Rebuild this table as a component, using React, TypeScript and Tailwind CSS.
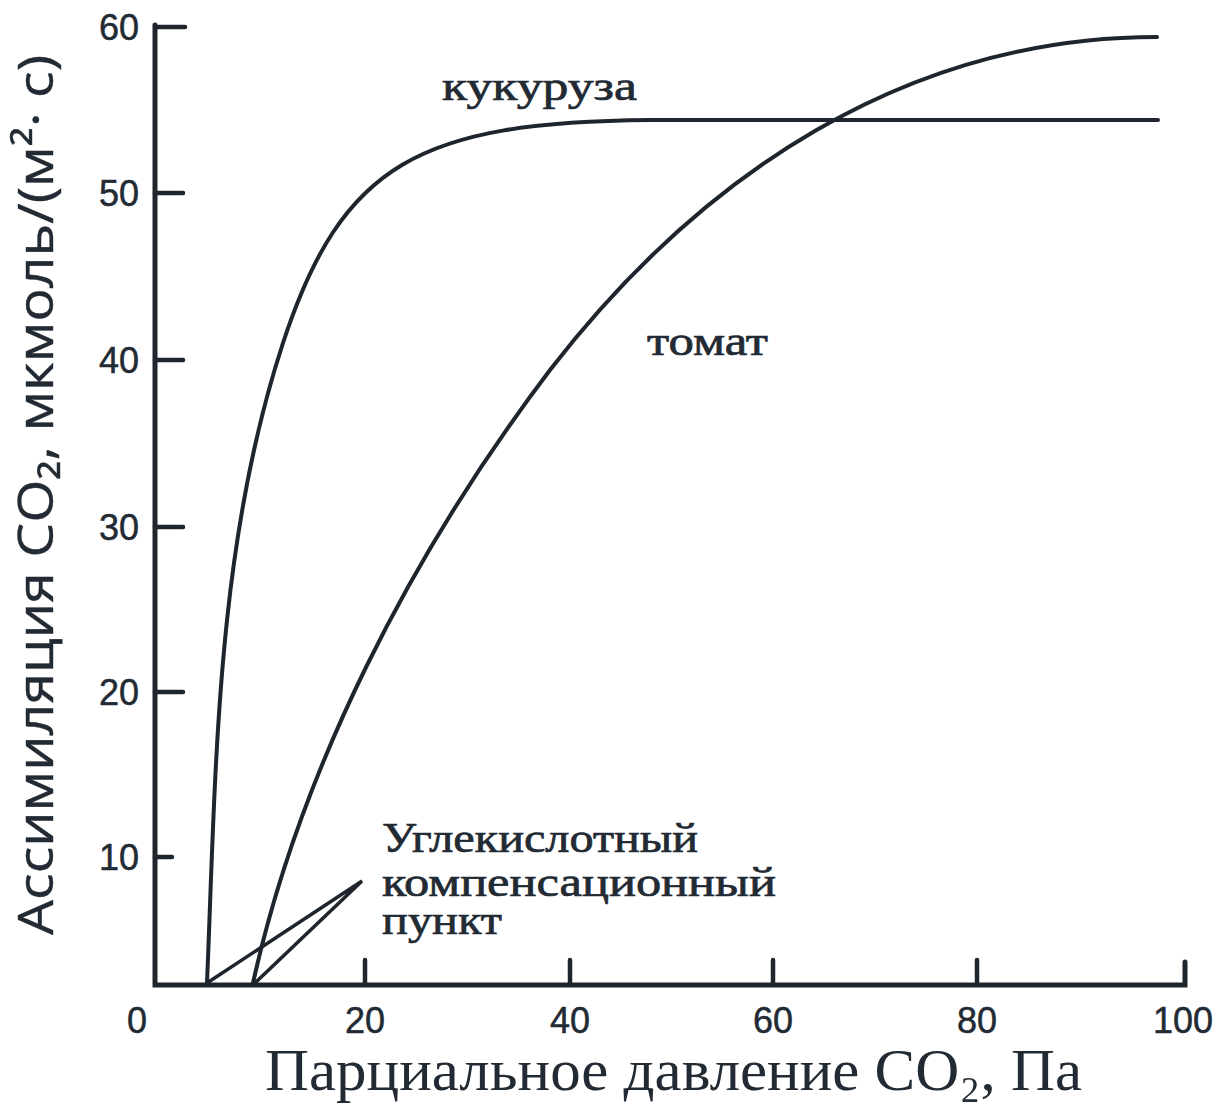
const yTicks = [
  { v: "60", y: 27, len: 30 },
  { v: "50", y: 193, len: 28 },
  { v: "40", y: 360, len: 28 },
  { v: "30", y: 527, len: 28 },
  { v: "20", y: 692, len: 28 },
  { v: "10", y: 857, len: 17 },
]

const xTicks = [
  { v: "20", x: 365 },
  { v: "40", x: 570 },
  { v: "60", x: 773 },
  { v: "80", x: 977 },
  { v: "100", x: 1183 },
]

// hand-fitted bezier curves, traced from the plot
const cornPath =
  "M207,983 C216,768 216,547 283,343 C342,163 420,122 650,120 L1158,120"
const tomatoPath =
  "M253,983 C300,770 410,555 550,370 C700,176 905,37 1157,37"

export default function App() {
  return (
    <div className="w-[1218px] h-[1110px] bg-white overflow-hidden">
      <svg width="1218" height="1110" viewBox="0 0 1218 1110" className="block">
        <g className="stroke-[#1e252d]" fill="none" strokeLinecap="round">
          {/* axes */}
          <path d="M155,25 L155,985 L1185,985 L1185,962" strokeWidth="5" strokeLinejoin="miter" />
          {yTicks.map((t) => (
            <line key={t.v} x1="155" y1={t.y} x2={155 + t.len} y2={t.y} strokeWidth="4.5" />
          ))}
          {xTicks.slice(0, 4).map((t) => (
            <line key={t.v} x1={t.x} y1="985" x2={t.x} y2="960" strokeWidth="4.5" />
          ))}

          {/* curves */}
          <path d={cornPath} strokeWidth="4" />
          <path d={tomatoPath} strokeWidth="4" />

          {/* compensation point pointers */}
          <path d="M207,983 L362,881 L255,983" strokeWidth="3.5" strokeLinejoin="miter" />
        </g>

        <g className="fill-[#222a33] stroke-[#222a33] stroke-[0.5] font-['Liberation_Sans',Arial,sans-serif] text-[36px]">
          {yTicks.map((t) => (
            <text key={t.v} x="139" y={t.y + 13} textAnchor="end">
              {t.v}
            </text>
          ))}
          <text x="137" y="1033" textAnchor="middle">0</text>
          {xTicks.map((t) => (
            <text key={t.v} x={t.x} y="1033" textAnchor="middle">
              {t.v}
            </text>
          ))}
        </g>

        <text
          transform="rotate(-90)"
          x="-935"
          y="53"
          textLength="880"
          lengthAdjust="spacingAndGlyphs"
          className="fill-[#222a33] stroke-[#222a33] stroke-[0.4] font-['Open_Sans',Arial,sans-serif] text-[50px]"
        >
          Ассимиляция CO₂, мкмоль/(м²· с)
        </text>

        <text
          x="265"
          y="1090"
          textLength="817"
          lengthAdjust="spacingAndGlyphs"
          className="fill-[#222a33] font-['Liberation_Serif','Times_New_Roman',serif] text-[60px]"
        >
          Парциальное давление CO₂, Па
        </text>

        <g className="fill-[#222a33] stroke-[#222a33] stroke-[0.7] font-['Liberation_Serif','Times_New_Roman',serif] text-[42px]">
          <text x="442" y="100" textLength="195" lengthAdjust="spacingAndGlyphs">
            кукуруза
          </text>
          <text x="647" y="355" textLength="121" lengthAdjust="spacingAndGlyphs">
            томат
          </text>
          <text x="382" y="852" textLength="316" lengthAdjust="spacingAndGlyphs">
            Углекислотный
          </text>
          <text x="382" y="896" textLength="394" lengthAdjust="spacingAndGlyphs">
            компенсационный
          </text>
          <text x="382" y="934" textLength="120" lengthAdjust="spacingAndGlyphs">
            пункт
          </text>
        </g>
      </svg>
    </div>
  )
}
